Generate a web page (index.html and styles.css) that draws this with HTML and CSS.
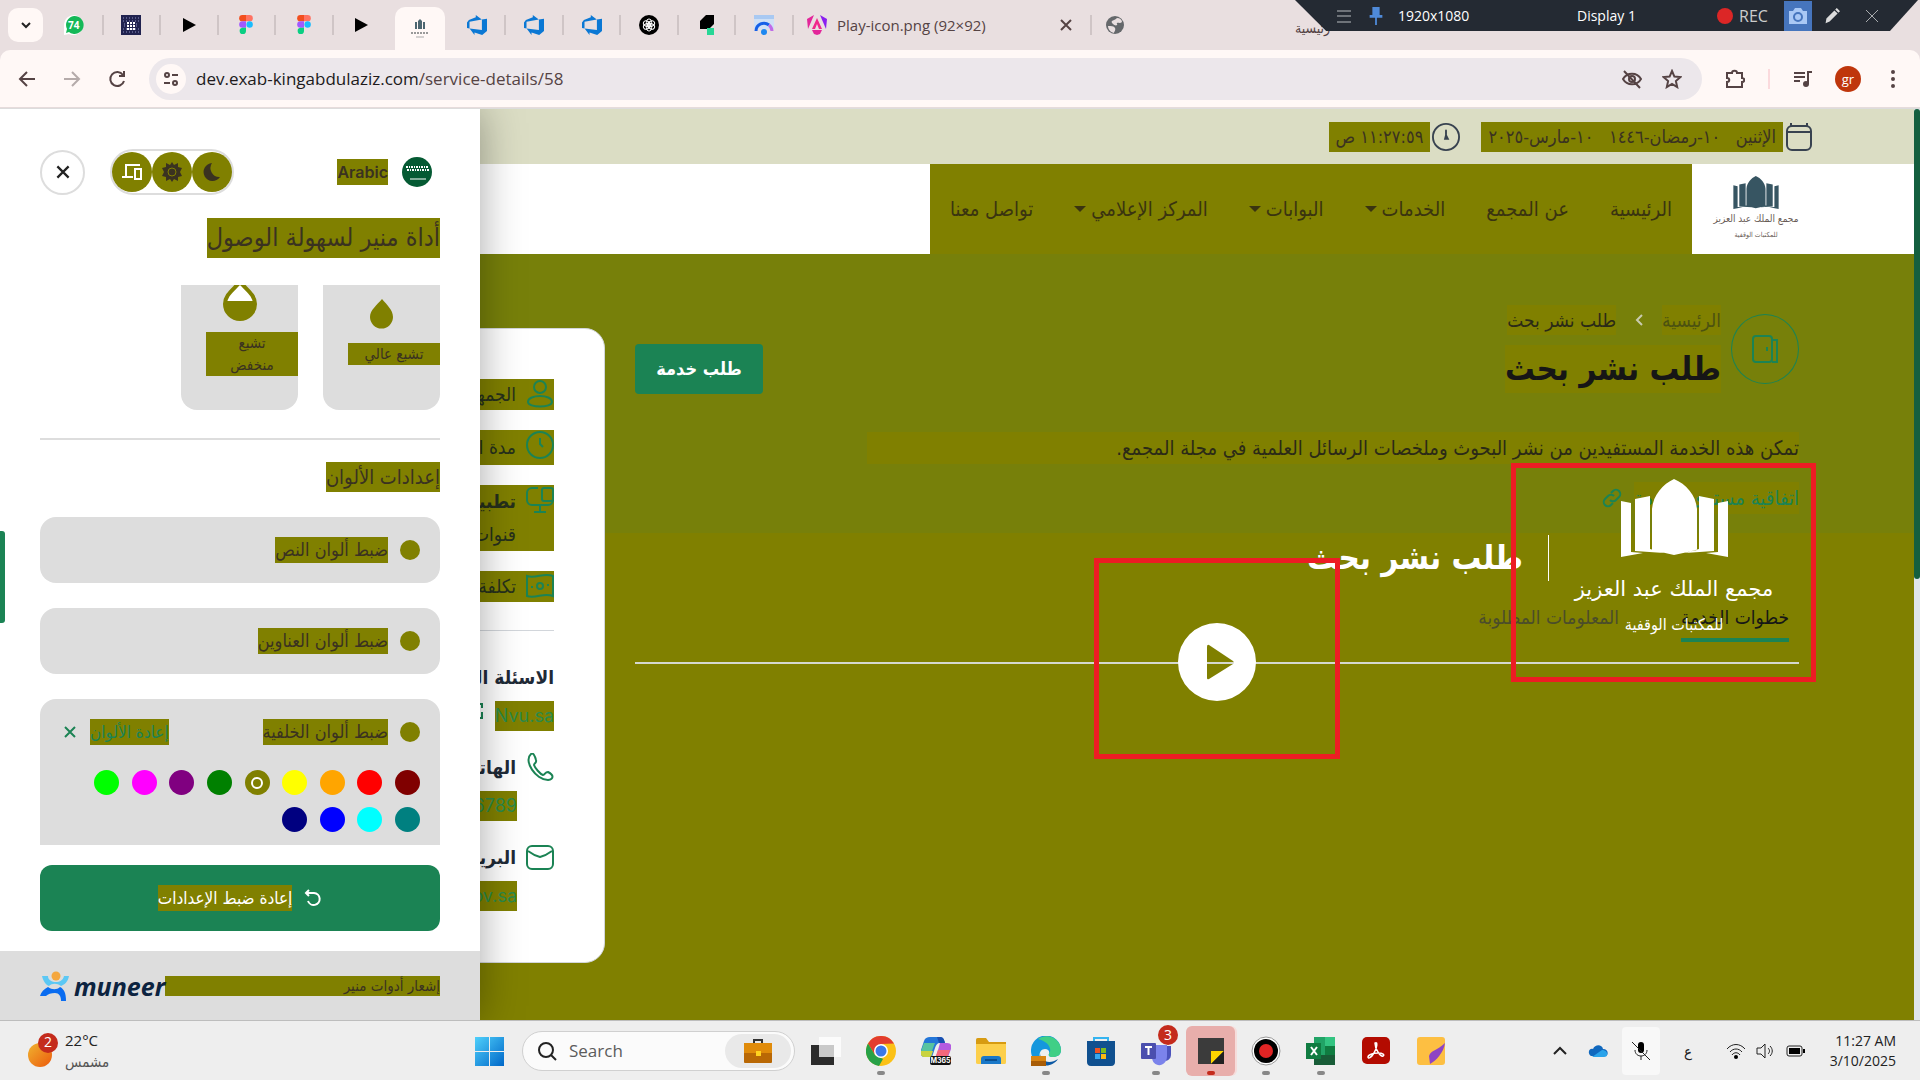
FILE: index.html
```html
<!DOCTYPE html>
<html lang="ar">
<head>
<meta charset="utf-8">
<title>طلب نشر بحث</title>
<link rel="stylesheet" href="styles.css">
</head>
<body>
<svg class="defs" aria-hidden="true">
  <symbol id="figma" viewBox="0 0 16 22"><path fill="#f24e1e" d="M4 0h4v7H4a3.500 3.500 0 0 1 0-7z"/><path fill="#ff7262" d="M8 0h4a3.500 3.500 0 0 1 0 7H8z"/><path fill="#a259ff" d="M4 7h4v7H4a3.500 3.500 0 0 1 0-7z"/><circle cx="12" cy="10.500" r="3.500" fill="#1abcfe"/><path fill="#0acf83" d="M4 14h4v3.500A3.500 3.500 0 1 1 4 14z"/></symbol>
  <symbol id="azure" viewBox="0 0 20 20"><path fill="#0b78d4" d="M0 7.500 1.900 5 8.800 2.200V0l6 4.400L2.500 6.800v6.800L0 12.900zM20 3.800v12.300L15.200 20l-7.700-2.600V20l-4.900-6.400 12.300 1.500V4.400z"/></symbol>
  <symbol id="play" viewBox="0 0 20 20"><path d="M4 3v14l13-7z"/></symbol>
  <symbol id="book" viewBox="0 0 107 78"><path fill="currentColor" d="M0 22l10 2v49l12 1-22 4zM14 20l15-3v53l14 4-29-2zM107 22l-10 2v49l-12 1 22 4zM93 20l-15-3v53l-14 4 29-2zM31 71V30C32 16 42 5 53 0c12 5 22 16 23 30v41l-23 5z"/></symbol>
  <symbol id="cal" viewBox="0 0 28 30"><g fill="none" stroke="currentColor" stroke-width="2"><rect x="2" y="4" width="24" height="24" rx="5"/><path d="M2 10h24M6 1v4M22 1v4"/></g></symbol>
  <symbol id="clock" viewBox="0 0 30 30"><g fill="none" stroke="currentColor" stroke-width="2" stroke-linecap="round"><circle cx="15" cy="15" r="14"/><path d="M15 8v5l2 4h-3l1-4"/></g></symbol>
  <symbol id="x" viewBox="0 0 16 16"><path fill="none" stroke="currentColor" stroke-width="2" d="M3 3l10 10M13 3L3 13"/></symbol>
</svg>

<header class="browser">
  <div class="strip">
    <button class="tab-list" aria-label="Search tabs"><svg viewBox="0 0 16 16"><path fill="none" stroke="#222" stroke-width="2" d="M4 6l4 4 4-4"/></svg></button>
    <div class="tabs">
      <div class="tab"><svg viewBox="0 0 20 20"><path fill="#fff" d="M10 0a10 10 0 1 1-5 19L0 20V9A10 10 0 0 1 10 0z"/><path fill="#15b858" d="M10 1a9 9 0 1 1-5 16L2 18l1-4A9 9 0 0 1 10 1z"/></svg><b class="count">74</b></div>
      <div class="tab"><svg viewBox="0 0 20 20"><path fill="#20224f" d="M0 0h20v20H0z"/><path stroke="#8f93c4" stroke-width="1" stroke-dasharray="1 2" d="M2 3h16M2 6h16M2 14h16M2 17h16M3 9h14M3 11h14"/><path stroke="#fff" stroke-width="2" stroke-dasharray="2 1" d="M6 8h8M6 11h8M6 14h8"/></svg></div>
      <div class="tab"><svg><use href="#play"/></svg></div>
      <div class="tab"><svg><use href="#figma"/></svg></div>
      <div class="tab"><svg><use href="#figma"/></svg></div>
      <div class="tab plain"><svg><use href="#play"/></svg></div>
      <div class="tab plain active"><svg viewBox="0 0 20 20"><path fill="#4c6670" d="M5 3h2v7H5zM13 3h2v7h-2zM8 2l2-2 2 2v8H8z"/><path stroke="#999" stroke-width="2" stroke-dasharray="2 1" d="M1 14h18"/><path stroke="#aaa" d="M6 18h8"/></svg></div>
      <div class="tab"><svg><use href="#azure"/></svg></div>
      <div class="tab"><svg><use href="#azure"/></svg></div>
      <div class="tab"><svg><use href="#azure"/></svg></div>
      <div class="tab"><svg viewBox="0 0 20 20"><circle cx="10" cy="10" r="10"/><g fill="none" stroke="#fff"><ellipse cx="10" cy="7.500" rx="2.600" ry="3.600"/><ellipse cx="10" cy="7.500" rx="2.600" ry="3.600" transform="rotate(60 10 10)"/><ellipse cx="10" cy="7.500" rx="2.600" ry="3.600" transform="rotate(120 10 10)"/><ellipse cx="10" cy="7.500" rx="2.600" ry="3.600" transform="rotate(180 10 10)"/><ellipse cx="10" cy="7.500" rx="2.600" ry="3.600" transform="rotate(240 10 10)"/><ellipse cx="10" cy="7.500" rx="2.600" ry="3.600" transform="rotate(300 10 10)"/></g></svg></div>
      <div class="tab"><svg viewBox="0 0 20 20"><path d="M9 0h8v9l-5 5H3V6z"/><path fill="#27d796" d="M10 13h7v7h-7z"/></svg></div>
      <div class="tab"><svg viewBox="0 0 20 20"><path fill="#cfe0f5" d="M0 0h20v14H0z"/><path fill="#a9c9f2" d="M0 0h20v4H0z"/><path fill="none" stroke="#1560e8" stroke-width="3" d="M2 16a8 8 0 0 1 13-6"/><path fill="none" stroke="#c06be8" stroke-width="3" d="M15 10a8 8 0 0 1 3 6"/><circle cx="10" cy="17" r="3" fill="#1e88f0"/></svg></div>
    </div>
    <div class="tab wide">
      <svg viewBox="0 0 20 20"><path fill="#e3269a" d="M0 4l7-4-6 14zM7 19l-2-4h10l-2 4-3 1z"/><path fill="#8a1ff0" d="M20 4l-7-4 6 14z"/><path fill="#f0288c" d="M10 3l5 11h-3l-2-5-2 5H5z"/></svg>
      <span>Play-icon.png (92×92)</span>
      <button class="tab-close" aria-label="Close tab"><svg><use href="#x"/></svg></button>
    </div>
    <svg class="globe" viewBox="0 0 20 20"><circle cx="10" cy="10" r="9" fill="#65686b"/><path fill="#e9dfe0" d="M12 3c3 0 5 2 5 4-2 2-4 0-5 1s1 1 0 2-3 0-4-1-2-2-1-3 3-1 5-3zM3 11c3 0 6 0 7 2s-1 4-1 5c-4-1-6-4-6-7z"/></svg>
    <span class="last-title" lang="ar" dir="rtl">رئيسية</span>
  </div>
  <div class="toolbar">
    <button aria-label="Back"><svg viewBox="0 0 20 20"><path d="M18 10H3M10 3l-7 7 7 7"/></svg></button>
    <button class="dim" aria-label="Forward"><svg viewBox="0 0 20 20"><path d="M2 10h15M10 3l7 7-7 7"/></svg></button>
    <button aria-label="Reload"><svg viewBox="0 0 20 20"><path d="M16 6a7 7 0 1 0 1 6M17 2v5h-5"/></svg></button>
    <div class="omnibox">
      <button class="site" aria-label="Site information"><svg viewBox="0 0 20 20"><circle cx="6" cy="6" r="2"/><path d="M11 6h6M3 14h6"/><circle cx="14" cy="14" r="2"/></svg></button>
      <span class="url">dev.exab-kingabdulaziz.com<span>/service-details/58</span></span>
      <svg viewBox="0 0 20 20"><path d="M1 10c4-7 14-7 18 0-4 7-14 7-18 0zM2 2l16 17"/><circle cx="10" cy="10" r="3"/></svg>
      <svg viewBox="0 0 20 20"><path d="M10 2l2.400 5.600 6 .5-4.500 4 1.300 6L10 15l-5.200 3.100 1.300-6-4.500-4 6-.5z"/></svg>
    </div>
    <button class="ext" aria-label="Extensions"><svg viewBox="0 0 20 20"><path d="M2 4h5c0-3 5-3 5 0h5v5c3 0 3 4 0 4v5H2v-5c3 0 3-4 0-4z"/></svg></button>
    <i class="bar"></i>
    <button aria-label="Media"><svg viewBox="0 0 20 20"><path d="M1 4h11M1 8h11M1 12h6M15 15V3h4"/><circle cx="13" cy="15" r="2" fill="#554344"/></svg></button>
    <button class="avatar" aria-label="Profile">gr</button>
    <button class="more" aria-label="Menu"><svg viewBox="0 0 20 20"><path stroke-width="4" stroke-linecap="round" d="M10 3v0M10 10v0M10 17v0"/></svg></button>
  </div>
  <div class="recorder">
    <svg viewBox="0 0 16 16"><path stroke="#b8bcc0" stroke-width="1" d="M1 3h14M1 8h14M1 14h14"/></svg>
    <svg viewBox="0 0 16 22"><path fill="#4f8ad9" d="M4 1h8v9h3v3H1v-3h3zM7 13h2v8H7z"/></svg>
    <span class="size">1920x1080</span>
    <span class="display">Display 1</span>
    <i class="dot"></i><span class="rec">REC</span>
    <button class="shot" aria-label="Screenshot"><svg viewBox="0 0 20 20"><path fill="#a9c8f5" d="M1 5h4l2-3h6l2 3h4v13H1z"/><circle cx="10" cy="11" r="4" fill="none" stroke="#4675bd" stroke-width="2"/></svg></button>
    <button aria-label="Draw"><svg viewBox="0 0 20 20"><path fill="#dcdcdc" d="M2 19l1-6L13 3l4 4-10 10zM14 2l2-2 4 4-2 2z"/></svg></button>
    <button aria-label="Close recorder"><svg viewBox="0 0 16 16"><path stroke="#a8abae" d="M2 2l12 12M14 2L2 14"/></svg></button>
  </div>
</header>

<main class="page" dir="rtl">
  <div class="site-body">
    <div class="infobar">
      <div class="stamp"><svg><use href="#cal"/></svg><span>الإثنين &nbsp; ١٠-رمضان-١٤٤٦ &nbsp; ١٠-مارس-٢٠٢٥</span></div>
      <div class="stamp"><svg><use href="#clock"/></svg><span>١١:٢٧:٥٩ ص</span></div>
    </div>
    <div class="navbar">
      <a class="brand" href="#"><svg><use href="#book"/></svg><b>مجمع الملك عبد العزيز</b><small>للمكتبات الوقفية</small></a>
      <nav>
        <a href="#">الرئيسية</a><a href="#">عن المجمع</a><a class="drop" href="#">الخدمات</a><a class="drop" href="#">البوابات</a><a class="drop" href="#">المركز الإعلامي</a><a href="#">تواصل معنا</a>
      </nav>
    </div>
    <section class="service">
      <div class="content">
        <div class="intro">
          <span class="door"><svg viewBox="0 0 28 30"><g fill="none" stroke="currentColor" stroke-width="2"><rect x="2" y="2" width="19" height="26" rx="3"/><path d="M21 6h5v22h-5M16 13v4"/></g></svg></span>
          <div class="heading">
            <div class="crumbs"><a href="#">الرئيسية</a><svg viewBox="0 0 10 14"><path fill="none" stroke="#c9cbb0" stroke-width="2" d="M8 2L3 7l5 5"/></svg><span>طلب نشر بحث</span></div>
            <h1>طلب نشر بحث</h1>
          </div>
          <button class="apply">طلب خدمة</button>
        </div>
        <p>تمكن هذه الخدمة المستفيدين من نشر البحوث وملخصات الرسائل العلمية في مجلة المجمع.</p>
        <a class="sla" href="#"><span>اتفاقية مستوى الخدمة</span><svg viewBox="0 0 20 20"><g fill="none" stroke="currentColor" stroke-width="2"><path d="M8 12a4 4 0 0 0 6 0l3-3a4 4 0 0 0-6-6L9 5"/><path d="M12 8a4 4 0 0 0-6 0l-3 3a4 4 0 0 0 6 6l2-2"/></g></svg></a>
        <div class="steps"><button class="on">خطوات الخدمة</button><button>المعلومات المطلوبة</button></div>
      </div>
      <aside class="facts">
        <div class="fact"><svg viewBox="0 0 28 28"><g class="ln"><circle cx="14" cy="7" r="6"/><path d="M2 22c0-8 24-8 24 0 0 6-24 6-24 0z"/></g></svg><span>الجمهور المستهدف</span></div>
        <div class="fact f2"><svg viewBox="0 0 28 28"><g class="ln"><circle cx="14" cy="14" r="13"/><path d="M14 7v6l3 3"/></g></svg><span>مدة الخدمة</span></div>
        <div class="fact f3"><svg viewBox="0 0 28 28"><g class="ln"><path d="M12 2H6a5 5 0 0 0-5 5v7a5 5 0 0 0 5 5h16a5 5 0 0 0 5-5M14 19v7M8 26h12"/><rect x="16" y="2" width="11" height="13" rx="2"/></g></svg><span><b>تطبيق الخدمة</b><br>قنوات التقديم</span></div>
        <div class="fact"><svg viewBox="0 0 28 28"><g class="ln"><path d="M1 4c9 3 17-4 26 0v20c-9-4-17 3-26 0z"/><circle cx="14" cy="14" r="3"/><path d="M5 15h2M21 13h2"/></g></svg><span>تكلفة الخدمة</span></div>
        <hr>
        <h2>الاسئلة الشائعة</h2>
        <div class="out"><a href="#">Nvu.sa</a><svg viewBox="0 0 16 20"><path class="ln" d="M11 7V3H6M11 11v6H4"/></svg></div>
        <h2><svg viewBox="0 0 28 28"><path class="ln" d="M5 1C-3 8 10 27 22 27c6-1 6-5 0-8-3 0-3 3-5 3-3-1-8-7-9-10 0-2 3-2 2-5C9 3 7-1 5 1z"/></svg>الهاتف</h2>
        <div class="out in"><a href="#">0123456789</a></div>
        <h2><svg viewBox="0 0 28 28"><g class="ln"><rect x="1" y="3" width="26" height="23" rx="5"/><path d="M2 8c4 3 8 5 12 6 4-1 8-3 12-6"/></g></svg>البريد الإلكتروني</h2>
        <div class="out in"><a href="#">info@nvu.gov.sa</a></div>
      </aside>
    </section>
  </div>
  <i class="scroll"><i></i></i>

  <div class="player">
    <div class="mark"><svg><use href="#book"/></svg><b>مجمع الملك عبد العزيز</b><small>للمكتبات الوقفية</small></div>
    <i class="rule"></i>
    <strong>طلب نشر بحث</strong>
  </div>
  <button class="play" aria-label="Play"><svg viewBox="0 0 78 78"><path fill="#fff" fill-rule="evenodd" d="M39 0a39 39 0 1 1 0 78 39 39 0 0 1 0-78zM29 24v31q0 2 2 1l24-15q2-1 0-3L31 22q-2-1-2 2z"/></svg></button>
  <i class="frame one"></i>
  <i class="frame two"></i>

  <section class="panel" aria-label="Accessibility">
    <div class="panel-top">
      <button class="lang"><span class="flag"><svg viewBox="0 0 31 31"><circle cx="15" cy="15" r="15" fill="#055a33"/><path stroke="#fff" stroke-width="2" stroke-dasharray="2 1 1 1" d="M4 10h22M5 13h22"/><path stroke="#fff" d="M8 22h16"/></svg></span><span class="hl">Arabic</span></button>
      <div class="modes">
        <button aria-label="Dark"><svg viewBox="0 0 20 20"><path fill="#3a3220" d="M10 1a9 9 0 1 0 8 14A9 9 0 0 1 10 1z"/></svg></button>
        <button aria-label="Light"><svg viewBox="0 0 20 20"><path fill="#3a3220" d="M10 0l2 3 4-2v4l4 1-2 4 2 4-4 1v4l-4-2-2 3-2-3-4 2v-4l-4-1 2-4-2-4 4-1V1l4 2z"/><circle cx="10" cy="10" r="4" fill="none" stroke="#808000"/></svg></button>
        <button aria-label="System"><svg viewBox="0 0 20 20"><path fill="none" stroke="#fff" stroke-width="2" d="M18 3H4v11M0 15h11"/><path fill="none" stroke="#fff" stroke-width="2" d="M13 7h6v10h-6z"/></svg></button>
      </div>
      <button class="close" aria-label="Close"><svg><use href="#x"/></svg></button>
    </div>
    <h2 class="panel-title"><span class="hl">أداة منير لسهولة الوصول</span></h2>
    <div class="options">
      <div class="sat">
        <button><svg viewBox="0 0 41 41"><path fill="#808000" d="M21 7c5 6 11 11 11 18a11 11 0 0 1-23 0c0-7 7-12 12-18z"/></svg><span>تشبع عالي</span></button>
        <button><svg viewBox="0 0 41 41"><path fill="#fff" stroke="#808000" stroke-width="4" d="M21 1c7 8 15 13 15 22a15 15 0 0 1-30 0C6 14 14 9 21 1z"/><path fill="#808000" d="M6 20h30v3a15 15 0 0 1-30 0z"/></svg><span>تشبع منخفض</span></button>
      </div>
      <hr>
      <h3><span class="hl">إعدادات الألوان</span></h3>
      <div class="setting"><div class="line"><i class="dot"></i><span class="hl">ضبط ألوان النص</span></div></div>
      <div class="setting"><div class="line"><i class="dot"></i><span class="hl">ضبط ألوان العناوين</span></div></div>
      <div class="setting last">
        <div class="line"><i class="dot"></i><span class="hl">ضبط ألوان الخلفية</span><button class="reset-colors"><span class="hl">إعادة الألوان</span><svg><use href="#x"/></svg></button></div>
        <div class="swatches">
          <button style="background:#800000" aria-label="Maroon"></button><button style="background:#ff0000" aria-label="Red"></button><button style="background:#ffa500" aria-label="Orange"></button><button style="background:#ffff00" aria-label="Yellow"></button><button class="picked" style="background:#808000" aria-label="Olive"></button><button style="background:#008000" aria-label="Green"></button><button style="background:#800080" aria-label="Purple"></button><button style="background:#ff00ff" aria-label="Fuchsia"></button><button style="background:#00ff00" aria-label="Lime"></button><button style="background:#008080" aria-label="Teal"></button><button style="background:#00ffff" aria-label="Aqua"></button><button style="background:#0000ff" aria-label="Blue"></button><button style="background:#000080" aria-label="Navy"></button>
        </div>
      </div>
    </div>
    <button class="reset"><svg viewBox="0 0 18 18"><path fill="none" stroke="#fff" stroke-width="2" d="M2 4h8a6 6 0 1 1-6 8M5 1L2 4l3 3"/></svg><span class="hl">إعادة ضبط الإعدادات</span></button>
    <footer>
      <span class="notice">إشعار أدوات منير</span>
      <a class="muneer" href="#" dir="ltr"><svg viewBox="0 0 29 30"><circle cx="16" cy="5" r="4.500" fill="#f4a73f"/><path fill="#5cc8f4" d="M2 5h6c0 4 4 6 8 6s7-2 8-6h5c-1 6-5 9-8 10-4-3-9-3-12 0C6 14 3 10 2 5z"/><path fill="#0a6cf0" d="M8 16c4 3 9 3 12 0 4 2 6 6 6 14h-5c0-5-2-8-6-8s-7 1-9 3l-6 0c1-4 4-7 8-9z"/></svg><span>muneer</span></a>
    </footer>
  </section>
  <i class="handle"></i>
</main>

<footer class="taskbar">
  <div class="weather">
    <svg viewBox="0 0 34 36"><defs><linearGradient id="sun" x2="1" y2="1"><stop stop-color="#f0b430"/><stop offset="1" stop-color="#ec5a0c"/></linearGradient></defs><circle cx="13" cy="22" r="12" fill="url(#sun)"/><circle cx="21" cy="10" r="10" fill="#c42b1c"/></svg>
    <b>2</b>
    <div><span>22°C</span><small>مشمس</small></div>
  </div>
  <div class="apps">
    <button aria-label="Start"><svg viewBox="0 0 30 30"><defs><linearGradient id="win" x2="1" y2="1"><stop stop-color="#4fd0fb"/><stop offset="1" stop-color="#0067c8"/></linearGradient></defs><path fill="url(#win)" d="M0 1h14v14H0zM15 1h14v14H15zM0 16h14v14H0zM15 16h14v14H15z"/></svg></button>
    <label class="search"><svg viewBox="0 0 20 20"><g fill="none" stroke="#222" stroke-width="2"><circle cx="9" cy="9" r="7"/><path d="M14 14l5 5"/></g></svg><input type="text" placeholder="Search" aria-label="Search"><span><svg viewBox="0 0 30 24"><path fill="none" stroke="#333" stroke-width="2" d="M11 4V1h8v3"/><rect x="1" y="4" width="28" height="20" rx="1" fill="#b96805"/><path fill="#e08b0a" d="M1 4h28v10H1z"/><path fill="#ffd21f" d="M13 12h5v5h-5z"/></svg></span></label>
    <button aria-label="Task view"><svg viewBox="0 0 30 30"><path fill="#2b2b2b" d="M0 9h23v20H0z"/><path fill="#fff" fill-opacity=".75" d="M8 1h22v20H8z"/></svg></button>
    <button class="run" aria-label="Chrome"><svg viewBox="0 0 30 30"><circle cx="15" cy="15" r="15" fill="#fbc116"/><path fill="#e23c2e" d="M2 7.500a15 15 0 0 1 26 0L15 8l-6 11z"/><path fill="#27a147" d="M2 7.500L9 19l8 4-4 7A15 15 0 0 1 2 7.500z"/><circle cx="15" cy="15" r="7" fill="#fff"/><circle cx="15" cy="15" r="5.500" fill="#3b78e7"/></svg></button>
    <button aria-label="Microsoft 365"><svg viewBox="0 0 30 30"><path fill="#2376d8" d="M9 1h10c3 0 4 2 5 6h-5c-3 0-4 2-5 5l-3 9H4c-4 0-5-3-4-7l3-9c1-3 3-4 6-4z"/><path fill="#1a4fb0" d="M16 1h3c3 0 4 2 5 6h-6z"/><path fill="#58c3a0" d="M3 7h11l-3 8H0z"/><path fill="#c9d33f" d="M0 15h12l-2 6H4c-4 0-5-3-4-6z"/><path fill="#b45be0" d="M19 7h7c4 0 5 3 4 6l-3 8H15z"/><path fill="#f4687b" d="M17 14h12l-3 8H14z"/><rect x="9" y="20" width="21" height="9" rx="2" fill="#111"/><text x="19.500" y="27" font-size="7" font-family="Inter,sans-serif" font-weight="700" fill="#fff" text-anchor="middle">M365</text></svg></button>
    <button aria-label="Explorer"><svg viewBox="0 0 30 30"><path fill="#d79b12" d="M0 5c0-2 0-3 2-3h8l3 4h17v8H0z"/><path fill="#fccf4b" d="M0 8h30v18c0 2-1 2-2 2H2c-2 0-2-1-2-2z"/><path fill="#1a78c8" d="M5 28v-5c0-2 1-3 3-3h14c2 0 3 1 3 3v5z"/><path stroke="#0a4f90" stroke-width="2" d="M9 24h12"/></svg></button>
    <button class="run" aria-label="Edge"><svg viewBox="0 0 30 30"><path fill="#1597dd" d="M0 15a15 15 0 0 1 30-1c0 5-4 7-8 7-3 0-5-1-4-3 1-3-1-5-4-5-5 0-7 6-4 11C3 27 0 20 0 15z"/><path fill="#40cf86" d="M7 3c10-7 23 0 23 11 0 5-4 7-8 7-3 0-5-1-4-3 4-6-2-13-11-15z"/><path fill="#0c59a4" d="M9 17c0 8 9 12 18 6-4 6-13 9-18 4z"/><path fill="#a85c06" d="M0 20h15v10H0z"/><path fill="#d98512" d="M0 20h15v5H0z"/></svg></button>
    <button aria-label="Store"><svg viewBox="0 0 30 30"><path fill="none" stroke="#34b4f0" stroke-width="2" d="M8 6V2h14v4"/><path fill="#10508f" d="M1 5h28v21c0 2-1 4-4 4H5c-3 0-4-2-4-4z"/><path fill="#f05423" d="M9 12h5v5H9z"/><path fill="#7fbb1e" d="M15 12h5v5h-5z"/><path fill="#38a9ef" d="M9 18h5v5H9z"/><path fill="#fdb813" d="M15 18h5v5h-5z"/></svg></button>
    <button class="run teams" aria-label="Teams"><svg viewBox="0 0 30 30"><path fill="#4b53bc" d="M18 10h12v8c0 8-8 8-10 5z"/><path fill="#7b83eb" d="M11 9h15v11c0 12-15 12-15 1z"/><rect y="7" width="15" height="16" rx="1" fill="#4b4fae"/><path fill="none" stroke="#fff" stroke-width="2" d="M4 11h7M7.500 11v8"/></svg><b>3</b></button>
    <button class="run current" aria-label="Sticky Notes"><svg viewBox="0 0 30 30"><path fill="#3b3b3b" d="M2 2h26v26H2z"/><path fill="#ffd400" d="M15 15h13L15 28z"/><path fill="#202020" d="M28 15v13H15z"/></svg></button>
    <button class="run" aria-label="Recorder"><svg viewBox="0 0 30 30"><circle cx="15" cy="15" r="14" fill="#fff" stroke="#999"/><circle cx="15" cy="15" r="12"/><circle cx="15" cy="15" r="7" fill="#e02424"/></svg></button>
    <button class="run" aria-label="Excel"><svg viewBox="0 0 30 30"><path fill="#21a366" d="M8 1h21v28H8z"/><path fill="#33c481" d="M19 1h10v9H19z"/><path fill="#185c37" d="M8 19h21v10H8z"/><path fill="#107c41" d="M19 10h10v9H19zM0 7h15v16H0z"/><path stroke="#fff" stroke-width="2" d="M5 11l6 8M11 11l-6 8"/></svg></button>
    <button aria-label="Acrobat"><svg viewBox="0 0 30 30"><rect x="1" y="1" width="28" height="27" rx="5" fill="#b30b00"/><path fill="none" stroke="#fff" stroke-width="1.500" d="M14 7c3-2 2 5-1 10s-6 6-6 4 5-4 10-4 7 2 5 3-8-6-8-13z"/></svg></button>
    <button aria-label="Notes"><svg viewBox="0 0 30 30"><rect x="1" y="1" width="28" height="28" rx="3" fill="#fdbf42"/><path fill="#8e44c4" d="M29 7c-8 8-14 7-16 13l1 8c6-3 14-12 15-21z"/></svg></button>
  </div>
  <div class="tray">
    <button aria-label="Hidden icons"><svg viewBox="0 0 20 20"><path fill="none" stroke="#222" stroke-width="2" d="M4 13l6-6 6 6"/></svg></button>
    <button aria-label="OneDrive"><svg viewBox="0 0 20 20"><path fill="#1068be" d="M3 15c-4-3-2-8 2-7 2-5 9-5 10 0 5 0 6 5 3 7z"/><path fill="#2aa3ea" d="M4 16l10-7c6 0 7 7 2 7z"/></svg></button>
    <button class="mic" aria-label="Microphone"><svg viewBox="0 0 20 20"><rect x="7" y="1" width="6" height="11" rx="3"/><path fill="none" stroke="#222" stroke-width="1" d="M4 9c0 8 12 8 12 0M10 15v4M1 1l18 18"/></svg></button>
    <button class="kb">ع</button>
    <button class="sys" aria-label="Network"><svg viewBox="0 0 20 20"><path fill="none" stroke="#222" stroke-width="1" d="M1 8c5-6 13-6 18 0M4 11c3-4 9-4 12 0M6 14c2-3 6-3 8 0"/><circle cx="10" cy="16" r="2"/></svg><svg viewBox="0 0 20 20"><path fill="none" stroke="#222" stroke-width="1" d="M1 7h4l4-4v14l-4-4H1zM12 7c2 2 2 4 0 6M14 5c3 3 3 7 0 10"/></svg><svg viewBox="0 0 20 20"><rect x="1" y="5" width="15" height="10" rx="2" fill="none" stroke="#222"/><path d="M3 7h11v6H3zM17 8h2v4h-2z"/></svg></button>
    <time>11:27 AM<br>3/10/2025</time>
  </div>
</footer>
</body>
</html>
```
FILE: styles.css
```css
:root {
  --olive: #808000;
  --green: #1b8354;
  --grey: #ddd;
  --ink: #3a3220;
}
* { box-sizing: border-box; }
body {
  margin: 0;
  height: 100vh;
  display: flex;
  flex-direction: column;
  overflow: hidden;
  font: 14px/20px "Open Sans", "DejaVu Sans Condensed", "DejaVu Sans", sans-serif;
  color: #222;
}
button { font: inherit; color: inherit; border: 0; padding: 0; background: none; display: flex; align-items: center; justify-content: center; }
a { text-decoration: none; color: inherit; }
i { font-style: normal; }
h1, h2, h3, p { margin: 0; }
svg { display: block; flex: none; }
.defs { position: absolute; width: 0; height: 0; }

/* browser window */
.browser { position: relative; background: #e9dfe0; }
.strip { height: 50px; display: flex; align-items: center; }
.tab-list { width: 35px; height: 34px; margin: 0 3px 0 8px; border-radius: 10px; background: #fff8f6; }
.tab-list svg { width: 16px; height: 16px; }
.tabs { width: 748px; height: 50px; display: grid; grid-template-columns: repeat(13, 1fr); }
.tab { position: relative; display: flex; align-items: center; justify-content: center; border-right: 2px solid #cfc5c6; height: 20px; align-self: center; }
.tab svg { width: 20px; height: 20px; }
.tab.plain { border-color: transparent; }
.tab.active { height: 43px; align-self: end; border: 0; border-radius: 10px 10px 0 0; background: #fff8f6; margin: 0 4px; }
.count { position: absolute; font-size: 10px; color: #fff; }
.wide { width: 298px; gap: 10px; padding: 0 16px 0 13px; justify-content: flex-start; color: #554344; font-size: 15px; }
.tab-close { margin-left: auto; }
.tab .tab-close svg { width: 16px; height: 16px; }
.globe { width: 20px; height: 20px; margin-left: 13px; }
.last-title { margin-left: 170px; padding-top: 6px; color: #554344; }
.toolbar { height: 58px; padding: 0 14px; display: flex; align-items: center; background: #fff8f6; border-radius: 10px 10px 0 0; border-bottom: 1px solid #e6dbdb; }
.toolbar svg { width: 20px; height: 20px; fill: none; stroke: #554344; stroke-width: 2; }
.toolbar > button { width: 26px; height: 26px; margin-right: 19px; }
.toolbar > .dim svg { stroke: #b5abaa; }
.omnibox { flex: 1; height: 42px; border-radius: 21px; background: #ece7eb; display: flex; align-items: center; gap: 20px; padding: 0 20px 0 7px; }
.omnibox .site { width: 30px; height: 30px; border-radius: 50%; background: #fff8f6; margin-right: -10px; }
.url { flex: 1; font-size: 17px; color: #201a1b; }
.url span { color: #554344; }
.toolbar > .ext { margin: 0 20px; }
.bar { width: 2px; height: 20px; background: #fbdadd; margin-right: 20px; }
.toolbar > .avatar { border-radius: 50%; background: #bf360c; color: #fff; font-size: 13px; }
.toolbar > .more { margin-right: 0; }

.recorder { position: absolute; top: 0; right: 2px; width: 623px; height: 31px; display: flex; align-items: center; background: #242a33; color: #fff; padding-left: 41px; clip-path: polygon(0 0, 100% 0, 95.500% 100%, 5% 100%); }
.recorder > svg { width: 16px; height: 20px; margin-right: 16px; }
.recorder .size { margin-left: -2px; width: 179px; }
.recorder .display { width: 140px; }
.recorder .dot { width: 16px; height: 16px; border-radius: 50%; background: #dc2626; margin-right: 6px; }
.recorder .rec { width: 45px; color: #ccc; font-size: 16px; }
.recorder button { width: 40px; height: 30px; }
.recorder button svg { width: 16px; height: 18px; }
.recorder .shot { width: 28px; background: #4675bd; }
.recorder .shot svg { width: 20px; height: 20px; }

/* site */
.page { position: relative; flex: 1; min-height: 0; display: flex; overflow: hidden; background: var(--olive); border-top: 1px solid #dcdcdc; font-family: "DejaVu Sans Condensed", "DejaVu Sans", sans-serif; color: var(--ink); }
.site-body { flex: 1; }
.scroll { width: 6px; background: #dfe5ea; order: -1; }
.scroll i { display: block; height: 470px; border-radius: 3px; background: #145f3f; }
.infobar { height: 55px; padding: 0 101px; display: flex; align-items: center; gap: 21px; background: #dbddc4; }
.stamp { display: flex; align-items: center; gap: 2px; color: #384250; }
.stamp svg { width: 28px; height: 30px; }
.stamp span { background: var(--olive); color: var(--ink); padding: 0 7px; font-size: 18px; line-height: 30px; }
.navbar { display: flex; height: 90px; background: #fff; }
.brand { width: 222px; padding: 12px 116px 0 22px; display: flex; flex-direction: column; align-items: center; }
.brand svg { width: 46px; height: 33px; color: #375562; }
.brand b, .brand small { font-size: 10px; line-height: 20px; white-space: nowrap; color: #6a5d57; font-weight: 400; }
.brand small { font-size: 7px; line-height: 12px; }
.navbar nav { width: 762px; background: var(--olive); display: flex; align-items: center; justify-content: space-between; padding: 0 20px; font-size: 20px; color: #3a3410; }
.drop::after { content: ""; display: inline-block; margin-right: 5px; border: 6px solid transparent; border-top-color: currentColor; border-bottom: 0; vertical-align: 4px; }
.service { display: grid; grid-template-columns: 1fr 490px; gap: 30px; padding: 0 115px; min-height: 766px; background: linear-gradient(#77800a 279px, var(--olive) 279px); align-items: start; }
.content { display: flex; flex-direction: column; align-items: flex-start; padding-top: 50px; }
.intro { display: flex; align-items: center; align-self: stretch; gap: 10px; height: 90px; }
.door { width: 68px; height: 70px; border: 1px solid var(--green); border-radius: 50%; color: var(--green); display: grid; place-items: center; }
.door svg { width: 28px; height: 30px; }
.heading { flex: 1; }
.crumbs { display: flex; align-items: center; gap: 18px; font-size: 19px; line-height: 30px; color: #4c5210; }
.crumbs a, .crumbs span, h1, .content p, .sla span { background: var(--olive); }
.crumbs svg { width: 10px; height: 14px; }
.crumbs span { color: #2b2a17; }
h1 { width: max-content; margin-top: 10px; font-size: 33px; line-height: 48px; color: #161616; }
.apply { width: 128px; height: 50px; align-self: flex-end; border-radius: 4px; background: var(--green); color: #fff; font-size: 18px; font-weight: 700; }
.content p { margin-top: 38px; width: 932px; font-size: 20px; line-height: 32px; color: #2b2a17; }
.sla { display: flex; align-items: center; gap: 12px; margin-top: 18px; font-size: 20px; line-height: 32px; color: var(--green); }
.sla svg { width: 20px; height: 20px; }
.steps { align-self: stretch; display: flex; gap: 62px; margin-top: 82px; padding: 0 10px 20px; border-bottom: 2px solid #d5d8cf; }
.steps button { height: 46px; border-bottom: 4px solid transparent; font-size: 19px; color: #4b4d2a; }
.steps .on { color: #161616; border-color: var(--green); }

.facts { margin-top: 74px; padding: 50px 50px 34px; background: #fff; border: 1px solid #d2d6db; border-radius: 20px; color: #1f2a37; }
.ln { fill: none; stroke: var(--green); stroke-width: 2; }
.fact { display: flex; gap: 10px; margin-bottom: 20px; background: var(--olive); font-size: 19px; line-height: 31px; color: #26301c; }
.fact svg { width: 28px; height: 30px; }
.fact.f2 { line-height: 35px; }
.fact.f3 { line-height: 33px; }
.facts hr { margin: 28px 0 27px; border: 0; border-top: 1px solid #d2d6db; }
.facts h2 { display: flex; align-items: center; gap: 10px; font-size: 19px; line-height: 38px; color: #1f2a37; }
.facts h2 svg { width: 28px; height: 28px; }
.out { display: flex; gap: 8px; margin: 5px 0 17px; }
.out.in { padding-right: 37px; }
.out a { background: var(--olive); color: #2b8a4b; font-size: 18px; line-height: 30px; font-family: Inter, sans-serif; }
.out svg { width: 16px; height: 20px; }

/* clip preview laid over the service page */
.player { position: absolute; top: 370px; right: 146px; display: flex; gap: 25px; color: #fff; }
.mark { width: 200px; display: flex; flex-direction: column; align-items: center; }
.mark svg { width: 107px; height: 78px; }
.mark b { font: 400 21px/48px "DejaVu Sans", sans-serif; margin-top: 8px; white-space: nowrap; }
.mark small { font-size: 16px; line-height: 24px; }
.rule { width: 1px; height: 46px; margin-top: 56px; background: #fff; }
.player strong { font-size: 33px; line-height: 46px; margin-top: 56px; }
.play { position: absolute; left: 1178px; top: 514px; width: 78px; height: 78px; }
.play svg { width: 78px; height: 78px; }
.frame { position: absolute; border: 5px solid #ed1c24; }
.frame.one { left: 1511px; top: 354px; width: 305px; height: 219px; }
.frame.two { left: 1094px; top: 449px; width: 246px; height: 201px; }

/* accessibility panel */
.panel { position: absolute; left: 0; top: 0; bottom: 0; width: 480px; display: flex; flex-direction: column; background: #fff; box-shadow: 0 0 40px rgba(0, 0, 0, .35); color: #3a3220; }
.hl { background: var(--olive); line-height: 26px; display: block; white-space: nowrap; }
.panel-top { display: flex; align-items: center; padding: 40px 47px 0 40px; direction: rtl; }
.lang { gap: 14px; font: 600 16px/26px Inter, sans-serif; margin-left: auto; }
.flag svg { width: 31px; height: 31px; }
.modes { display: flex; height: 46px; border: 2px solid var(--grey); border-radius: 23px; margin-left: 25px; align-items: center; }
.modes button { width: 40px; height: 40px; border-radius: 50%; background: var(--olive); }
.modes svg { width: 20px; height: 20px; }
.close { width: 45px; height: 45px; border: 2px solid var(--grey); border-radius: 50%; color: #222; }
.close svg { width: 18px; height: 18px; }
.panel-title { display: flex; padding: 23px 40px 27px; font-size: 25px; font-weight: 400; }
.panel-title .hl { line-height: 40px; }
.options { flex: 1; min-height: 0; overflow: hidden; margin: 0 40px; }
.sat { display: flex; gap: 25px; margin-top: -39px; }
.sat button { width: 117px; height: 164px; border-radius: 16px; background: var(--grey); flex-direction: column; gap: 10px; }
.sat svg { width: 41px; height: 41px; }
.sat span { align-self: flex-start; width: 92px; padding: 0 16px; background: var(--olive); font-size: 15px; line-height: 22px; }
.sat button:first-child span { padding: 0; }
.options hr { margin: 28px 0 22px; border: 0; border-top: 2px solid var(--grey); }
.options h3 { display: flex; font-size: 20px; font-weight: 400; }
.options h3 .hl { line-height: 30px; }
.setting { margin-top: 25px; padding: 20px; background: var(--grey); border-radius: 16px; font-size: 18px; }
.line { display: flex; align-items: center; gap: 12px; }
.line .dot { width: 20px; height: 20px; border-radius: 50%; background: var(--olive); }
.reset-colors { margin-right: auto; padding-left: 2px; gap: 12px; color: var(--green); font-size: 17px; }
.reset-colors svg { width: 16px; height: 16px; }
.swatches { display: grid; grid-template-columns: repeat(9, 25px); justify-content: space-between; row-gap: 12px; width: 326px; margin: 25px 0 30px; }
.swatches button { height: 25px; border-radius: 50%; }
.picked::after { content: ""; width: 8px; height: 8px; border: 2px solid #fff; border-radius: 50%; }
.reset { margin: 20px 40px; height: 66px; gap: 12px; border-radius: 12px; background: var(--green); color: #fff; font-size: 17px; }
.reset svg { width: 18px; height: 18px; }
.panel footer { height: 69px; padding: 0 40px; display: flex; align-items: center; background: var(--grey); }
.notice { flex: 1; background: var(--olive); line-height: 20px; font-size: 15px; }
.muneer { display: flex; align-items: center; gap: 5px; color: #0c2340; font: italic 700 25px/30px "Open Sans", sans-serif; }
.muneer svg { width: 29px; height: 30px; }
.handle { position: absolute; left: 0; top: 422px; width: 5px; height: 92px; border-radius: 0 3px 3px 0; background: var(--green); }

/* taskbar */
.taskbar { height: 60px; display: flex; align-items: center; background: #eee; border-top: 1px solid #bdbdbd; padding: 0 24px 0 27px; }
.weather { position: relative; display: flex; align-items: center; gap: 4px; width: 448px; flex: none; }
.weather svg { width: 34px; height: 36px; }
.weather b { position: absolute; left: 17px; top: 2px; font-weight: 400; color: #fff; }
.weather span, .weather small { display: block; font-size: 15px; line-height: 21px; }
.weather small { color: #555; }
.apps { display: flex; align-items: center; margin-right: auto; }
.apps > button { position: relative; width: 55px; height: 50px; }
.apps > button > svg { width: 30px; height: 30px; }
.apps > button:first-child { width: 47px; justify-content: flex-start; }
.apps .search { display: flex; align-items: center; width: 273px; height: 40px; margin-right: 3px; padding: 0 3px 0 14px; gap: 12px; border: 1px solid #d0d0d0; border-radius: 20px; background: #fbfbfb; }
.search > svg { width: 20px; height: 20px; }
.search input { flex: 1; min-width: 0; border: 0; background: none; padding: 0; font: 17px/24px "Open Sans", sans-serif; }
.search input::placeholder { color: #5c5c5c; }
.search span { width: 66px; height: 34px; border-radius: 17px; background: #e9e9e9; display: grid; place-items: center; }
.search span svg { width: 30px; height: 24px; }
.run::after { content: ""; position: absolute; bottom: 1px; left: 24px; width: 8px; height: 4px; border-radius: 2px; background: #888; }
.apps > .current { width: 49px; margin: 0 3px; background: #e8aeab; border-radius: 6px; box-shadow: 2px 0 #f6dddb; }
.current::after { left: 21px; background: #c42b1c; }
.teams b { position: absolute; top: -1px; right: 5px; width: 20px; height: 20px; border-radius: 50%; background: #c42b1c; color: #fff; font-weight: 400; }
.tray { display: flex; align-items: center; gap: 10px; }
.tray svg { width: 20px; height: 20px; }
.tray button { width: 28px; height: 48px; }
.tray .mic { width: 38px; border-radius: 4px; background: #f8f8f8; }
.tray .kb { margin-left: 4px; font-size: 15px; }
.tray .sys { width: 80px; gap: 10px; margin-left: 14px; }
.tray time { text-align: right; width: 80px; }
```
